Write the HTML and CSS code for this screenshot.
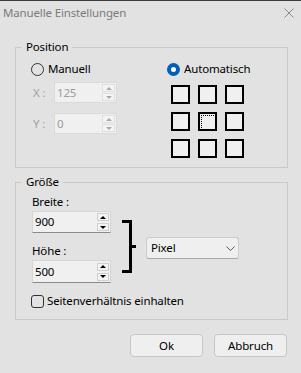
FILE: index.html
```html
<!DOCTYPE html>
<html lang="de">
<head>
  <meta charset="UTF-8">
  <title>Manuelle Einstellungen</title>
  <link rel="stylesheet" href="styles.css">
</head>
<body>
  <div class="dialog">
    <!-- Title bar -->
    <div class="titlebar">
      <span class="title">Manuelle Einstellungen</span>
      <svg class="close" width="10" height="10" viewBox="0 0 10 10">
        <path d="M0.5 0.5 L9.5 9.5 M9.5 0.5 L0.5 9.5" stroke="#8a8a8a" stroke-width="1" fill="none"/>
      </svg>
    </div>

    <!-- Position -->
    <fieldset class="group group-position">
      <legend>Position</legend>
      <div class="position-body">
        <div class="pos-manual">
          <div class="radio"><span class="radio-dot"></span>Manuell</div>
          <div class="coord-row">
            <span class="coord-label">X :</span>
            <div class="spin spin-disabled">
              <span class="spin-value">125</span>
              <span class="spin-buttons"><span class="spin-btn up"></span><span class="spin-btn down"></span></span>
            </div>
          </div>
          <div class="coord-row second">
            <span class="coord-label">Y :</span>
            <div class="spin spin-disabled">
              <span class="spin-value">0</span>
              <span class="spin-buttons"><span class="spin-btn up"></span><span class="spin-btn down"></span></span>
            </div>
          </div>
        </div>
        <div class="pos-auto">
          <div class="radio"><span class="radio-dot checked"></span>Automatisch</div>
          <div class="anchor-grid">
            <span class="cell"></span><span class="cell"></span><span class="cell"></span>
            <span class="cell"></span><span class="cell active"></span><span class="cell"></span>
            <span class="cell"></span><span class="cell"></span><span class="cell"></span>
          </div>
        </div>
      </div>
    </fieldset>

    <!-- Size -->
    <fieldset class="group group-size">
      <legend>Größe</legend>
      <div class="size-body">
        <div class="size-row">
          <div class="size-inputs">
            <div class="field-label">Breite :</div>
            <div class="spin spin-size">
              <span class="spin-value">900</span>
              <span class="spin-buttons"><span class="spin-btn up"></span><span class="spin-btn down"></span></span>
            </div>
            <div class="field-label second">Höhe :</div>
            <div class="spin spin-size tall">
              <span class="spin-value">500</span>
              <span class="spin-buttons"><span class="spin-btn up"></span><span class="spin-btn down"></span></span>
            </div>
          </div>
          <div class="bracket">
            <span class="bracket-arm"></span>
            <span class="bracket-tick"></span>
          </div>
          <div class="dropdown">
            <span>Pixel</span>
            <svg width="9" height="5" viewBox="0 0 9 5">
              <path d="M0.5 0.5 L4.5 4.5 L8.5 0.5" stroke="#555" stroke-width="1" fill="none"/>
            </svg>
          </div>
        </div>
        <div class="checkbox-row">
          <span class="checkbox"></span>Seitenverhältnis einhalten
        </div>
      </div>
    </fieldset>

    <!-- Buttons -->
    <div class="actions">
      <button class="btn">Ok</button>
      <button class="btn">Abbruch</button>
    </div>
  </div>
</body>
</html>
```

FILE: styles.css
```css
/* General */
* {
  box-sizing: border-box;
}
body {
  margin: 0;
  background-color: #e2e2e2;
  color: #000;
  font-family: "Noto Sans", "Open Sans", sans-serif;
  font-size: 11.5px;
  letter-spacing: -0.15px;
  line-height: 16px;
}
.dialog {
  width: 301px;
  height: 373px;
  border-top: 1px solid #3d3d3d;
  background-color: #e2e2e2;
}

/* Title bar */
.titlebar {
  display: flex;
  justify-content: space-between;
  align-items: flex-start;
  height: 29px;
  padding: 4px 7px 0 3px;
}
.title {
  color: #7b7b7b;
}
.close {
  margin-top: 3px;
}

/* Group boxes */
.group {
  margin: 0 13px 0 15px;
  padding: 0;
  border: 1px solid #cacaca;
  min-width: 0;
}
.group legend {
  margin-left: 6px;
  padding: 0 4px;
}
.group-position {
  margin-top: 9px;
  height: 129px;
}
.group-size {
  margin-top: 6px;
  height: 146px;
}

/* Radio buttons */
.radio {
  display: flex;
  align-items: center;
  gap: 4px;
}
.radio-dot {
  width: 13px;
  height: 13px;
  border: 1px solid #333;
  border-radius: 50%;
}
.radio-dot.checked {
  border: 4px solid #005fb8;
  background-color: #fff;
}

/* Position section */
.position-body {
  display: flex;
  padding: 6px 0 0 15px;
}
.pos-manual {
  width: 136px;
}
.coord-row {
  display: flex;
  align-items: center;
  margin-top: 5px;
}
.coord-row.second {
  margin-top: 10px;
}
.coord-label {
  width: 23px;
  padding-left: 2px;
  color: #a3a3a3;
}
.anchor-grid {
  display: grid;
  grid-template-columns: repeat(3, 19px);
  gap: 8px;
  margin: 8px 0 0 4px;
}
.cell {
  width: 19px;
  height: 19px;
  border: 2px solid #000;
  background-color: #f0f0f0;
}
.cell.active {
  padding: 1px;
}
.cell.active::after {
  content: "";
  display: block;
  width: 13px;
  height: 13px;
  border: 1px dotted #000;
}

/* Spin boxes */
.spin {
  display: flex;
  align-items: center;
  width: 63px;
  height: 21px;
  padding: 0 1px 0 2px;
  border: 1px solid #dadada;
  background-color: #f0f0f0;
}
.spin-value {
  flex: 1;
}
.spin-disabled .spin-value {
  color: #9c9c9c;
}
.spin-buttons {
  display: flex;
  flex-direction: column;
  gap: 1px;
}
.spin-btn {
  display: flex;
  align-items: center;
  justify-content: center;
  width: 13px;
  height: 8px;
  border: 1px solid #dedede;
  background-color: #f4f4f4;
}
.spin-btn::after {
  content: "";
  border-left: 3px solid transparent;
  border-right: 3px solid transparent;
}
.spin-btn.up::after {
  border-bottom: 3px solid #a8a8a8;
}
.spin-btn.down::after {
  border-top: 3px solid #a8a8a8;
}
.spin-size {
  width: 79px;
  height: 22px;
  border-color: #d6d6d6;
  border-bottom-color: #8a8a8a;
}
.spin-size.tall {
  height: 23px;
}
.spin-size .spin-btn {
  width: 12px;
  border-color: #d0d0d0;
}
.spin-size .spin-buttons {
  gap: 2px;
}
.spin-size .spin-btn.up::after {
  border-bottom-color: #000;
}
.spin-size .spin-btn.down::after {
  border-top-color: #000;
}

/* Size section */
.size-body {
  padding: 4px 0 0 16px;
}
.size-row {
  display: flex;
  align-items: flex-start;
}
.field-label {
  margin-bottom: 1px;
}
.field-label.second {
  margin-top: 10px;
}
.bracket {
  display: flex;
  align-items: center;
  margin: 26px 0 0 11px;
}
.bracket-arm {
  width: 10px;
  height: 53px;
  border: 3px solid #000;
  border-left: none;
}
.bracket-tick {
  width: 4px;
  height: 3px;
  background-color: #000;
}
.dropdown {
  display: flex;
  justify-content: space-between;
  align-items: center;
  width: 93px;
  height: 22px;
  margin: 43px 0 0 10px;
  padding: 0 3px 0 4px;
  border: 1px solid #cdcdcd;
  border-bottom-color: #a9a9a9;
  border-radius: 3px;
  background-color: #efefef;
}
.checkbox-row {
  display: flex;
  align-items: center;
  gap: 3px;
  margin: 10px 0 0 -1px;
}
.checkbox {
  width: 13px;
  height: 13px;
  border: 1px solid #333;
  border-radius: 3px;
}

/* Buttons */
.actions {
  display: flex;
  justify-content: flex-end;
  gap: 11px;
  margin-top: 14px;
  padding-right: 14px;
}
.btn {
  width: 73px;
  height: 23px;
  border: 1px solid #c6c6c6;
  border-radius: 4px;
  background-color: #efefef;
  color: #000;
  font-family: inherit;
  font-size: 11.5px;
  letter-spacing: -0.15px;
  line-height: 16px;
  padding: 0;
}
```
